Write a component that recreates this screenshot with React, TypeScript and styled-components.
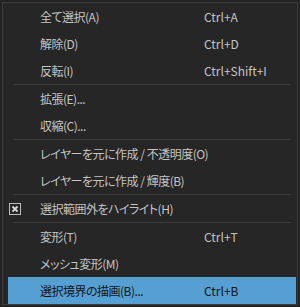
import React from 'react';
import styled, { createGlobalStyle } from 'styled-components';

const GlobalStyle = createGlobalStyle`
  html, body {
    margin: 0;
    padding: 0;
    background: #232323;
  }
`;

const Menu = styled.div`
  box-sizing: border-box;
  margin: 2px 0 0 2px;
  width: 296px;
  border: 1px solid #3e3e3e;
  background: #262626;
  display: flex;
  flex-direction: column;
  font-family: "Noto Sans CJK JP", "Noto Sans", sans-serif;
  font-size: 12px;
  font-feature-settings: "palt";
  color: #c4c4c4;
`;

const Item = styled.div<{ $active?: boolean }>`
  display: grid;
  grid-template-columns: 32px 164px 1fr;
  align-items: center;
  height: 27px;
  margin: 0 1px 0 5px;
  background: ${({ $active }) => ($active ? '#569fd3' : 'transparent')};
  color: ${({ $active }) => ($active ? '#141414' : '#c4c4c4')};
  white-space: nowrap;
`;

const IconCell = styled.span`
  display: flex;
  align-items: center;
  padding-left: 1px;
`;

const Label = styled.span`
  line-height: 1;
  letter-spacing: -0.5px;
`;

const Shortcut = styled.span`
  line-height: 1;
`;

const Separator = styled.div`
  height: 1px;
  margin: 0 6px 0 10px;
  background: #3c3c3c;
`;

const CheckIcon: React.FC = () => (
  <svg width="12" height="12" viewBox="0 0 12 12">
    <rect x="0.5" y="0.5" width="11" height="11" fill="none" stroke="#bdbdbd" />
    <path d="M3.5 3.5 L8.5 8.5 M8.5 3.5 L3.5 8.5" stroke="#d8d8d8" strokeWidth="1.8" />
  </svg>
);

type Entry =
  | { sep: true }
  | { label: string; shortcut?: string; checked?: boolean; active?: boolean };

const entries: Entry[] = [
  { label: '全て選択(A)', shortcut: 'Ctrl+A' },
  { label: '解除(D)', shortcut: 'Ctrl+D' },
  { label: '反転(I)', shortcut: 'Ctrl+Shift+I' },
  { sep: true },
  { label: '拡張(E)...' },
  { label: '収縮(C)...' },
  { sep: true },
  { label: 'レイヤーを元に作成 / 不透明度(O)' },
  { label: 'レイヤーを元に作成 / 輝度(B)' },
  { sep: true },
  { label: '選択範囲外をハイライト(H)', checked: true },
  { sep: true },
  { label: '変形(T)', shortcut: 'Ctrl+T' },
  { label: 'メッシュ変形(M)' },
  { label: '選択境界の描画(B)...', shortcut: 'Ctrl+B', active: true },
];

export default function App() {
  return (
    <>
      <GlobalStyle />
      <Menu>
        {entries.map((e, i) =>
          'sep' in e ? (
            <Separator key={i} />
          ) : (
            <Item key={i} $active={e.active}>
              <IconCell>{e.checked && <CheckIcon />}</IconCell>
              <Label>{e.label}</Label>
              <Shortcut>{e.shortcut}</Shortcut>
            </Item>
          )
        )}
      </Menu>
    </>
  );
}
